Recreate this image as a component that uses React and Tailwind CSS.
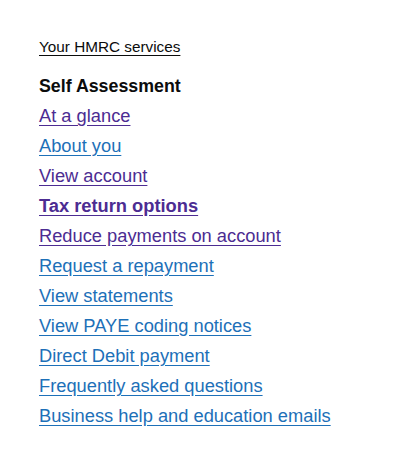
import React from 'react';

const links = [
  { label: 'At a glance', visited: true },
  { label: 'About you' },
  { label: 'View account', visited: true },
  { label: 'Tax return options', visited: true, current: true },
  { label: 'Reduce payments on account', visited: true },
  { label: 'Request a repayment' },
  { label: 'View statements' },
  { label: 'View PAYE coding notices' },
  { label: 'Direct Debit payment' },
  { label: 'Frequently asked questions' },
  { label: 'Business help and education emails' },
];

export default function App() {
  return (
    <div
      className="min-h-[452px] w-[412px] bg-white px-[39px] pt-[37px] text-[#0b0c0c]"
      style={{ fontFamily: '"Liberation Sans", Arial, sans-serif' }}
    >
      <a href="#" className="block text-[15.3px] leading-[20px] text-[#0b0c0c] underline underline-offset-[3px]">
        Your HMRC services
      </a>

      <nav className="mt-[14px]">
        <h2 className="text-[17.8px] font-bold leading-[30px]">Self Assessment</h2>
        <ul>
          {links.map((link) => (
            <li key={link.label} className="text-[18.3px] leading-[30px]">
              <a
                href="#"
                className={`underline underline-offset-[3px] ${
                  link.visited ? 'text-[#4c2c92]' : 'text-[#1d70b8]'
                } ${link.current ? 'font-bold' : ''}`}
              >
                {link.label}
              </a>
            </li>
          ))}
        </ul>
      </nav>
    </div>
  );
}
